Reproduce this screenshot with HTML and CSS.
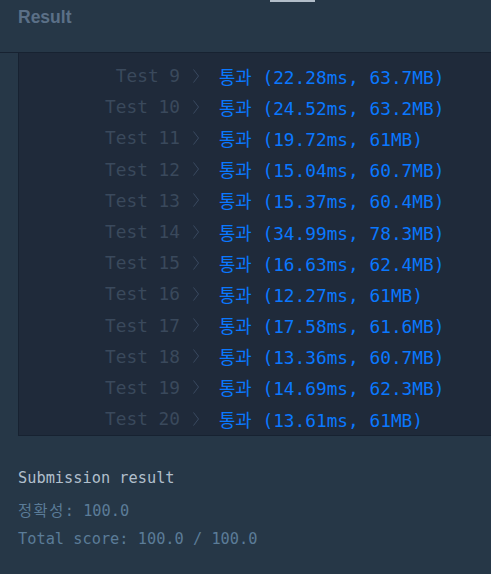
FILE: index.html
```html
<!DOCTYPE html>
<html lang="ko">
<head>
<meta charset="utf-8">
<title>Result</title>
<link rel="stylesheet" href="styles.css">
</head>
<body>
<div class="header">
  <div class="handle"></div>
  <div class="title">Result</div>
</div>
<div class="console">
  <div class="row"><span class="label">Test 9</span><svg class="chev" viewBox="0 0 6 14"><polyline points="0.5,0.5 5.5,7 0.5,13.5"/></svg><span class="res">통과 (22.28ms, 63.7MB)</span></div>
  <div class="row"><span class="label">Test 10</span><svg class="chev" viewBox="0 0 6 14"><polyline points="0.5,0.5 5.5,7 0.5,13.5"/></svg><span class="res">통과 (24.52ms, 63.2MB)</span></div>
  <div class="row"><span class="label">Test 11</span><svg class="chev" viewBox="0 0 6 14"><polyline points="0.5,0.5 5.5,7 0.5,13.5"/></svg><span class="res">통과 (19.72ms, 61MB)</span></div>
  <div class="row"><span class="label">Test 12</span><svg class="chev" viewBox="0 0 6 14"><polyline points="0.5,0.5 5.5,7 0.5,13.5"/></svg><span class="res">통과 (15.04ms, 60.7MB)</span></div>
  <div class="row"><span class="label">Test 13</span><svg class="chev" viewBox="0 0 6 14"><polyline points="0.5,0.5 5.5,7 0.5,13.5"/></svg><span class="res">통과 (15.37ms, 60.4MB)</span></div>
  <div class="row"><span class="label">Test 14</span><svg class="chev" viewBox="0 0 6 14"><polyline points="0.5,0.5 5.5,7 0.5,13.5"/></svg><span class="res">통과 (34.99ms, 78.3MB)</span></div>
  <div class="row"><span class="label">Test 15</span><svg class="chev" viewBox="0 0 6 14"><polyline points="0.5,0.5 5.5,7 0.5,13.5"/></svg><span class="res">통과 (16.63ms, 62.4MB)</span></div>
  <div class="row"><span class="label">Test 16</span><svg class="chev" viewBox="0 0 6 14"><polyline points="0.5,0.5 5.5,7 0.5,13.5"/></svg><span class="res">통과 (12.27ms, 61MB)</span></div>
  <div class="row"><span class="label">Test 17</span><svg class="chev" viewBox="0 0 6 14"><polyline points="0.5,0.5 5.5,7 0.5,13.5"/></svg><span class="res">통과 (17.58ms, 61.6MB)</span></div>
  <div class="row"><span class="label">Test 18</span><svg class="chev" viewBox="0 0 6 14"><polyline points="0.5,0.5 5.5,7 0.5,13.5"/></svg><span class="res">통과 (13.36ms, 60.7MB)</span></div>
  <div class="row"><span class="label">Test 19</span><svg class="chev" viewBox="0 0 6 14"><polyline points="0.5,0.5 5.5,7 0.5,13.5"/></svg><span class="res">통과 (14.69ms, 62.3MB)</span></div>
  <div class="row"><span class="label">Test 20</span><svg class="chev" viewBox="0 0 6 14"><polyline points="0.5,0.5 5.5,7 0.5,13.5"/></svg><span class="res">통과 (13.61ms, 61MB)</span></div>
</div>
<div class="summary">
  <div class="sum-title">Submission result</div>
  <div class="sum-line"><span class="ko">정확성</span>: 100.0</div>
  <div class="sum-line">Total score: 100.0 / 100.0</div>
</div>
</body>
</html>
```
FILE: styles.css
```css
html, body {
  margin: 0;
  padding: 0;
}
body {
  background: #263747;
  width: 491px;
  height: 574px;
  overflow: hidden;
}
.header {
  height: 52px;
  border-bottom: 1px solid #172231;
  padding-left: 18px;
  box-sizing: content-box;
}
.handle {
  width: 45px;
  height: 2px;
  margin-left: 252px;
  background: #b2bdc9;
}
.title {
  font-family: "Liberation Sans", Arial, sans-serif;
  font-weight: bold;
  font-size: 17.5px;
  line-height: 24px;
  margin-top: 3px;
  color: #5b7087;
}
.console {
  margin-left: 18px;
  height: 383px;
  background: #1f2a3a;
  border-left: 1px solid #172231;
  border-bottom: 1px solid #172231;
  padding-top: 7px;
  box-sizing: border-box;
  overflow: hidden;
  font-family: "DejaVu Sans Mono", "Noto Sans CJK KR", monospace;
  font-size: 17.8px;
}
.row {
  display: flex;
  align-items: center;
  height: 31.2px;
  white-space: pre;
}
.label {
  width: 161px;
  text-align: right;
  color: #3a495c;
}
.chev {
  width: 6px;
  height: 14px;
  margin-left: 13px;
  fill: none;
  stroke: #3a4a60;
  stroke-width: 1;
}
.res {
  margin-left: 20px;
  color: #0a78ff;
}
.summary {
  padding: 32px 18px 0;
  font-family: "DejaVu Sans Mono", "Noto Sans CJK KR", monospace;
  font-size: 15.3px;
}
.sum-title {
  line-height: 20px;
  color: #b1bfcc;
  margin-bottom: 9px;
}
.sum-line {
  line-height: 28px;
  color: #5b7c98;
}
.ko {
  letter-spacing: 1.5px;
}
```
